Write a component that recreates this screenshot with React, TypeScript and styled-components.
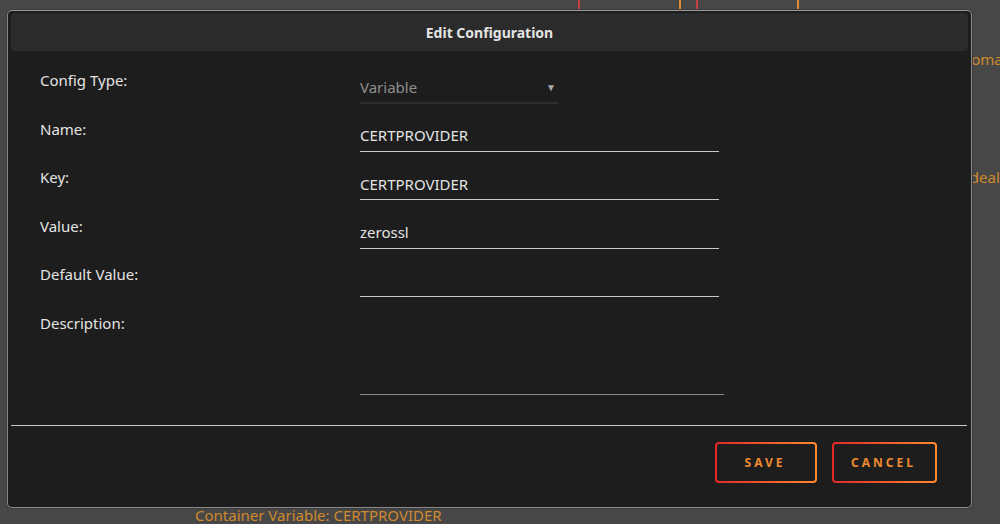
import React from 'react';
import styled, { createGlobalStyle } from 'styled-components';

const colors = {
    page: '#474747',
    modal: '#1d1d1d',
    header: '#2b2b2b',
    frame: '#8a8a8a',
    text: '#e4e4e4',
    muted: '#8f8f8f',
    red: '#e22828',
    orange: '#ff8a2f',
    link: '#d08a2c',
};

const GlobalStyle = createGlobalStyle`
    html, body {
        margin: 0;
        padding: 0;
        background: ${colors.page};
        font-family: 'Noto Sans', 'Open Sans', sans-serif;
        overflow: hidden;
    }
    * { box-sizing: border-box; }
`;

const Page = styled.div`
    position: relative;
    width: 1000px;
    height: 524px;
    display: flex;
    flex-direction: column;
`;

const ButtonStubs = styled.div`
    display: flex;
    gap: 15px;
    padding-left: 578px;
    height: 10px;
`;

const Stub = styled.div`
    width: 103px;
    height: 100%;
    border-left: 2px solid #c94040;
    border-right: 2px solid #e08a35;
`;

const SideText = styled.div<{ top: number; left: number }>`
    margin-top: ${({ top }) => top}px;
    padding-left: ${({ left }) => left}px;
    color: ${colors.link};
    font-size: 15px;
    line-height: 20px;
    white-space: nowrap;
    overflow: hidden;
`;

const FooterText = styled.div`
    margin-top: auto;
    padding: 0 0 0 195px;
    color: ${colors.link};
    font-size: 15px;
    line-height: 17px;
`;

const Modal = styled.div`
    position: absolute;
    left: 7px;
    top: 10px;
    width: 965px;
    height: 498px;
    background: ${colors.modal};
    border: 1px solid ${colors.frame};
    border-top-color: #9a9a9a;
    border-radius: 5px;
    padding: 2px 3px;
    display: flex;
    flex-direction: column;
    box-shadow: 0 0 0 1px #3a3a3a;
`;

const Header = styled.div`
    height: 38px;
    background: ${colors.header};
    border-radius: 4px;
    display: flex;
    align-items: center;
    justify-content: center;
    color: ${colors.text};
    font-size: 14px;
    font-weight: 700;
`;

const Form = styled.div`
    display: grid;
    grid-template-columns: 320px 1fr;
    grid-auto-rows: 48.6px;
    padding: 19px 0 0 29px;
`;

const Label = styled.div`
    color: ${colors.text};
    font-size: 15px;
    line-height: 20px;
`;

const Field = styled.div<{ width: number; dim?: boolean }>`
    width: ${({ width }) => width}px;
    height: ${({ dim }) => (dim ? 34 : 33)}px;
    display: flex;
    align-items: center;
    justify-content: space-between;
    padding-top: 1px;
    border-bottom: ${({ dim }) => (dim ? '2px solid #2e2e2e' : '1px solid #c9c9c9')};
    color: ${({ dim }) => (dim ? colors.muted : colors.text)};
    font-size: 15px;
`;

const Arrow = styled.span`
    font-size: 10px;
    color: #a8a8a8;
    margin-right: 2px;
`;

const TextArea = styled.div`
    width: 364px;
    height: 82px;
    border-bottom: 1px solid #8a8a8a;
`;

const Divider = styled.div`
    margin-top: auto;
    height: 1px;
    background: #c8c8c8;
    margin-bottom: 16px;
    margin-right: 1px;
`;

const Actions = styled.div`
    display: flex;
    justify-content: flex-end;
    gap: 15px;
    padding-right: 31px;
    margin-bottom: 22px;
`;

const Button = styled.div<{ width: number }>`
    width: ${({ width }) => width}px;
    height: 41px;
    border-radius: 4px;
    padding: 2px;
    background: linear-gradient(90deg, ${colors.red}, ${colors.orange});
    display: flex;
`;

const ButtonInner = styled.div`
    flex: 1;
    background: ${colors.modal};
    border-radius: 2px;
    display: flex;
    align-items: center;
    justify-content: center;
    color: #f08a30;
    font-size: 12px;
    font-weight: 700;
    letter-spacing: 3px;
    padding-right: 2px;
`;

const rows: { label: string; value: string }[] = [
    { label: 'Name:', value: 'CERTPROVIDER' },
    { label: 'Key:', value: 'CERTPROVIDER' },
    { label: 'Value:', value: 'zerossl' },
    { label: 'Default Value:', value: '' },
];

export default function App() {
    return (
        <>
            <GlobalStyle />
            <Page>
                <ButtonStubs>
                    <Stub />
                    <Stub />
                </ButtonStubs>
                <SideText top={39} left={962}>domain</SideText>
                <SideText top={98} left={966}>ideal</SideText>
                <FooterText>Container Variable: CERTPROVIDER</FooterText>

                <Modal>
                    <Header>Edit Configuration</Header>
                    <Form>
                        <Label>Config Type:</Label>
                        <Field width={198} dim>
                            Variable
                            <Arrow>▼</Arrow>
                        </Field>
                        {rows.map((r) => (
                            <React.Fragment key={r.label}>
                                <Label>{r.label}</Label>
                                <Field width={359}>{r.value}</Field>
                            </React.Fragment>
                        ))}
                        <Label>Description:</Label>
                        <TextArea />
                    </Form>
                    <Divider />
                    <Actions>
                        <Button width={102}>
                            <ButtonInner>SAVE</ButtonInner>
                        </Button>
                        <Button width={105}>
                            <ButtonInner>CANCEL</ButtonInner>
                        </Button>
                    </Actions>
                </Modal>
            </Page>
        </>
    );
}
